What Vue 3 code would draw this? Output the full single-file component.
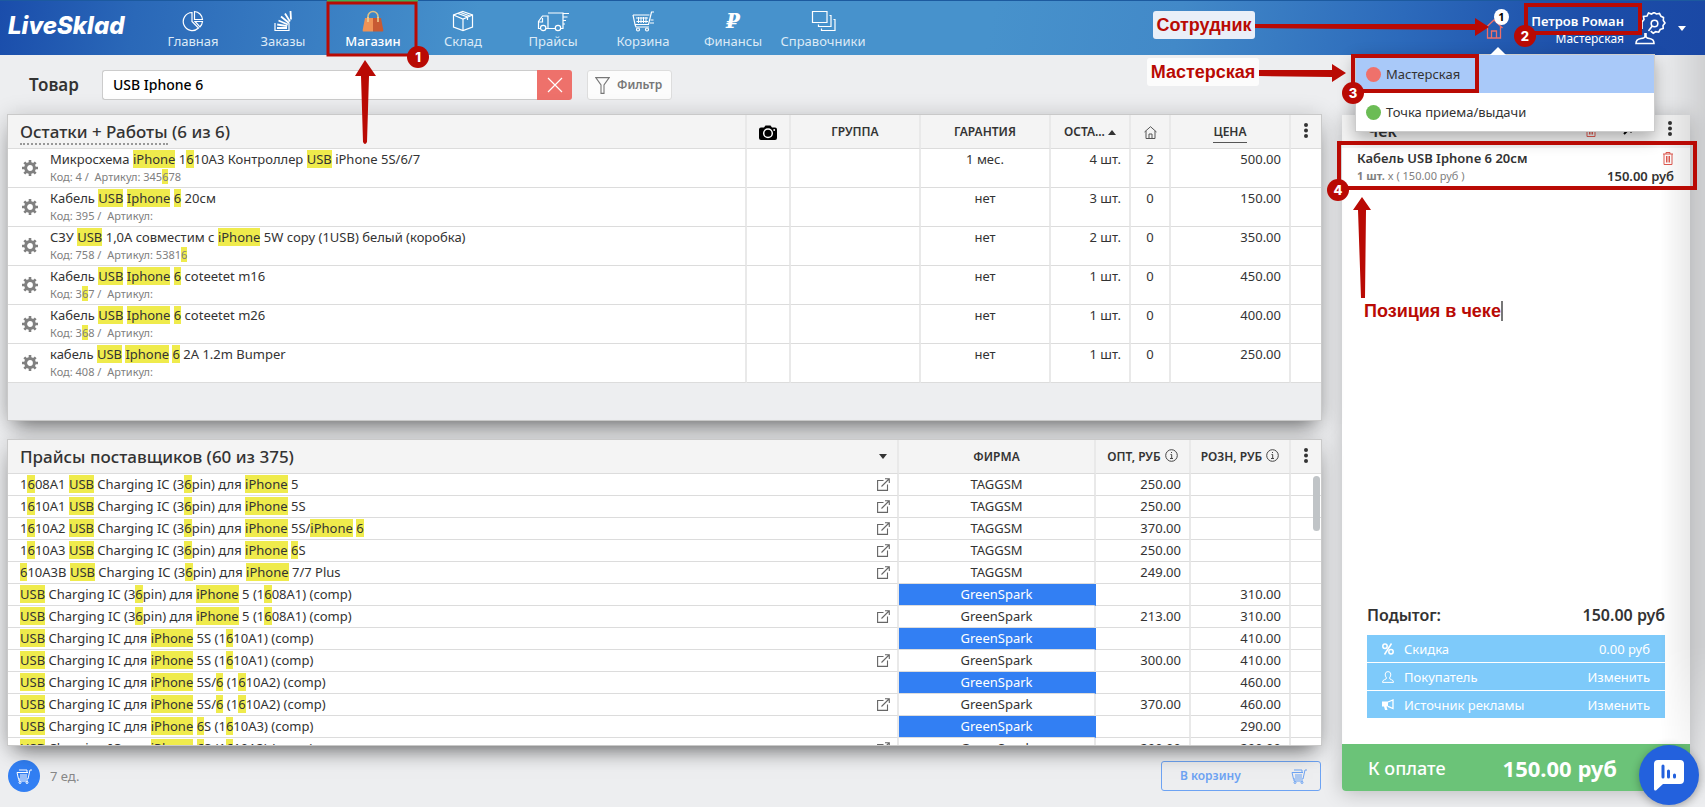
<script setup>
import { ref } from 'vue'

const query = ref('USB Iphone 6')

const nav = [
  { id: 'home', label: 'Главная' },
  { id: 'orders', label: 'Заказы' },
  { id: 'shop', label: 'Магазин', active: true },
  { id: 'stock', label: 'Склад' },
  { id: 'prices', label: 'Прайсы' },
  { id: 'cart', label: 'Корзина' },
  { id: 'finance', label: 'Финансы' },
  { id: 'books', label: 'Справочники' }
]

// Square brackets mark the fragments that match the search query.
const parts = (s) => s.split(/[[\]]/).map((text, i) => ({ text, hit: i % 2 === 1 }))

const goods = [
  { name: 'Микросхема [iPhone] 1[6]10A3 Контроллер [USB] iPhone 5S/6/7', code: '4', art: '345[6]78', warranty: '1 мес.', left: '4 шт.', house: 2, price: '500.00' },
  { name: 'Кабель [USB] [Iphone] [6] 20см', code: '395', art: '', warranty: 'нет', left: '3 шт.', house: 0, price: '150.00' },
  { name: 'СЗУ [USB] 1,0А совместим с [iPhone] 5W copy (1USB) белый (коробка)', code: '758', art: '5381[6]', warranty: 'нет', left: '2 шт.', house: 0, price: '350.00' },
  { name: 'Кабель [USB] [Iphone] [6] coteetet m16', code: '3[6]7', art: '', warranty: 'нет', left: '1 шт.', house: 0, price: '450.00' },
  { name: 'Кабель [USB] [Iphone] [6] coteetet m26', code: '3[6]8', art: '', warranty: 'нет', left: '1 шт.', house: 0, price: '400.00' },
  { name: 'кабель [USB] [Iphone] [6] 2A 1.2m Bumper', code: '408', art: '', warranty: 'нет', left: '1 шт.', house: 0, price: '250.00' }
]

const offers = [
  { name: '1[6]08A1 [USB] Charging IC (3[6]pin) для [iPhone] 5', link: true, firm: 'TAGGSM', opt: '250.00', retail: '' },
  { name: '1[6]10A1 [USB] Charging IC (3[6]pin) для [iPhone] 5S', link: true, firm: 'TAGGSM', opt: '250.00', retail: '' },
  { name: '1[6]10A2 [USB] Charging IC (3[6]pin) для [iPhone] 5S/[iPhone] [6]', link: true, firm: 'TAGGSM', opt: '370.00', retail: '' },
  { name: '1[6]10A3 [USB] Charging IC (3[6]pin) для [iPhone] [6]S', link: true, firm: 'TAGGSM', opt: '250.00', retail: '' },
  { name: '[6]10A3B [USB] Charging IC (3[6]pin) для [iPhone] 7/7 Plus', link: true, firm: 'TAGGSM', opt: '249.00', retail: '' },
  { name: '[USB] Charging IC (3[6]pin) для [iPhone] 5 (1[6]08A1) (comp)', firm: 'GreenSpark', mark: true, opt: '', retail: '310.00' },
  { name: '[USB] Charging IC (3[6]pin) для [iPhone] 5 (1[6]08A1) (comp)', link: true, firm: 'GreenSpark', opt: '213.00', retail: '310.00' },
  { name: '[USB] Charging IC для [iPhone] 5S (1[6]10A1) (comp)', firm: 'GreenSpark', mark: true, opt: '', retail: '410.00' },
  { name: '[USB] Charging IC для [iPhone] 5S (1[6]10A1) (comp)', link: true, firm: 'GreenSpark', opt: '300.00', retail: '410.00' },
  { name: '[USB] Charging IC для [iPhone] 5S/[6] (1[6]10A2) (comp)', firm: 'GreenSpark', mark: true, opt: '', retail: '460.00' },
  { name: '[USB] Charging IC для [iPhone] 5S/[6] (1[6]10A2) (comp)', link: true, firm: 'GreenSpark', opt: '370.00', retail: '460.00' },
  { name: '[USB] Charging IC для [iPhone] [6]S (1[6]10A3) (comp)', firm: 'GreenSpark', mark: true, opt: '', retail: '290.00' },
  { name: '[USB] Charging IC для [iPhone] [6]S (1[6]10A3) (comp)', link: true, firm: 'GreenSpark', opt: '290.00', retail: '290.00' }
]
</script>

<template>
  <div class="app">
    <header class="top">
      <a href="#" class="logo">LiveSklad</a>
      <nav class="nav">
        <a v-for="n in nav" :key="n.id" href="#" :class="['nav-item', { active: n.active }]">
          <span class="nav-icon">
            <svg v-if="n.id === 'home'" width="22" height="22" viewBox="0 0 22 22" class="line">
              <path d="M10 2.500A9 9 0 1 0 16.500 18L10 11.500Z" /><path d="M12.500 1.500a8.500 8.500 0 0 1 8 8h-8Z" /><path d="M13 11.500h7.500a9 9 0 0 1-2.600 5.500Z" />
            </svg>
            <svg v-else-if="n.id === 'orders'" width="20" height="22" viewBox="0 0 20 22" class="line">
              <path d="M2 13v7.500h14V13" /><path d="M4 18h10M4.200 14.500l10 1.600M5.500 10.500l9.300 4M8 6.500l8 6.500M12 3.500l5 8M17.500 1l.5 8.500" stroke-width="1.800" />
            </svg>
            <svg v-else-if="n.id === 'shop'" width="22" height="22" viewBox="0 0 22 22">
              <path d="M6 11V6.500a5 5 0 0 1 10 0V11" fill="none" stroke="#e2c183" stroke-width="1.600" />
              <path d="M3 8h8v13.500H1.200Q.5 21.500.7 20Z" fill="#ef9356" /><path d="M11 8h8l2.300 12q.2 1.500-1 1.500H11Z" fill="#c75a33" />
              <path d="M6 7v5M16 7v5" stroke="#f2d797" stroke-width="1.400" />
            </svg>
            <svg v-else-if="n.id === 'stock'" width="22" height="22" viewBox="0 0 22 22" class="line">
              <path d="M11 1.500l9.500 3.500v12L11 20.500 1.500 17V5Z" /><path d="M1.500 5L11 9l9.500-4M11 9v11.500M6 3.500L15.500 7v3M8.500 2.500L18 6" />
            </svg>
            <svg v-else-if="n.id === 'prices'" width="33" height="22" viewBox="0 0 33 22" class="line">
              <path d="M4 18.500H1.500v-7L5.500 6H11V18.500H8.500M11 3h15v15.500h-2.500M18.500 18.500H11M5.500 8v4H1.800" /><circle cx="6.200" cy="18" r="2.700" /><circle cx="21" cy="18" r="2.700" /><path d="M26 3.500h6M26 7h4.500M26 10.500h3M26 14h2" />
            </svg>
            <svg v-else-if="n.id === 'cart'" width="23" height="22" viewBox="0 0 23 22" class="line">
              <path d="M1 5h16.500M1 5l2 9.500h13.500L19.500 2h2.500M3 14.500l1 2.500h13" /><path d="M4 8h12M4.500 11.500H16M6.500 7v6M9 7v6M11.500 7v6M14 7v6M18.500 10h3M18 13h4" stroke-width="1" /><circle cx="6" cy="19.500" r="1.500" /><circle cx="15" cy="19.500" r="1.500" />
            </svg>
            <span v-else-if="n.id === 'finance'" class="ruble">₽</span>
            <svg v-else width="25" height="22" viewBox="0 0 25 22" class="line">
              <path d="M1.500 1.500h14.500v11H1.500Z" /><path d="M18.500 5.500h1.500v11H7.500V14.500M22.500 9.500h1.500v11H10.500V18.500" />
            </svg>
          </span>
          <span>{{ n.label }}</span>
        </a>
      </nav>

      <button class="branch" aria-label="Точки">
        <svg width="18" height="20" viewBox="0 0 18 20" fill="none" stroke="#ee6f69" stroke-width="1.300">
          <path d="M.5 9L9 1l8.500 8M2.500 7.500V19h13V7.500M6.500 19v-7h5v7" />
        </svg>
        <span class="branch-count">1</span>
      </button>
      <div class="user">
        <strong>Петров Роман</strong>
        <span>Мастерская</span>
      </div>
      <button class="profile" aria-label="Профиль">
        <svg width="31" height="33" viewBox="0 0 31 33" fill="none" stroke="#fff" stroke-width="1.600">
          <path d="M10 21v3.500q0 1.500-4 2-5 .7-5 5h18q0-4.300-4.500-5-3.500-.5-3.500-2V21" />
          <path d="M7 17V10l2-2.500-.5-3 3.500-.5 1.500-3 3 1 2.500-1.500 2.500 1.500 3-.5 1.500 2.800 2.500 1.200-.2 3 1.700 2.500-2 2.500.2 3-3 1-1.500 2.700-3-.5-2.500 1.500-2.500-2" />
          <circle cx="19.500" cy="11.500" r="3.300" /><path d="M17.200 14l-3.700 5" />
        </svg>
        <svg width="8" height="5" viewBox="0 0 8 5" fill="#fff"><path d="M0 0h8L4 5Z" /></svg>
      </button>

      <ul class="branches">
        <li class="current"><i class="dot red"></i>Мастерская</li>
        <li><i class="dot green"></i>Точка приема/выдачи</li>
      </ul>
    </header>

    <form class="search" @submit.prevent>
      <label for="q">Товар</label>
      <div class="field">
        <input id="q" v-model="query" type="text" />
        <button type="button" class="clear" aria-label="Очистить" @click="query = ''">
          <svg width="16" height="16" viewBox="0 0 16 16" stroke="#fff" stroke-width="1.200"><path d="M1 1l14 14M15 1L1 15" /></svg>
        </button>
      </div>
      <button type="button" class="filter">
        <svg width="15" height="17" viewBox="0 0 15 17" fill="none" stroke="#777" stroke-width="1.100"><path d="M.8.600h13.400L9 8v8.400H6V8Z" /></svg>
        Фильтр
      </button>
    </form>

    <main class="main">
      <section class="left">
        <div class="panel">
          <table class="goods">
            <colgroup>
              <col /><col class="w44" /><col class="w130" /><col class="w130" /><col class="w80" /><col class="w40" /><col class="w120" /><col class="w30" />
            </colgroup>
            <thead>
              <tr>
                <th class="title"><span class="dotted">Остатки + Работы</span> (6 из 6)</th>
                <th>
                  <svg width="18" height="15" viewBox="0 0 18 15"><path d="M2 2.500h3L6.500.500h5L13 2.500h3q2 0 2 2v8.500q0 2-2 2H2q-2 0-2-2V4.500q0-2 2-2Z" fill="#000" /><circle cx="9" cy="8.200" r="4.300" fill="none" stroke="#fff" stroke-width="1.500" /><circle cx="15.200" cy="5" r=".9" fill="#fff" /></svg>
                </th>
                <th>ГРУППА</th>
                <th>ГАРАНТИЯ</th>
                <th class="sorted">ОСТА... <svg width="8" height="5" viewBox="0 0 8 5" fill="#333"><path d="M0 5L4 0l4 5Z" /></svg></th>
                <th>
                  <svg width="13" height="13" viewBox="0 0 13 13" fill="none" stroke="#555"><path d="M.5 6L6.500.700l6 5.300M2 5v7.500h9V5M5 12.500V8h3v4.500" /></svg>
                </th>
                <th><span class="under">ЦЕНА</span></th>
                <th class="menu"><button aria-label="Меню таблицы"><svg width="4" height="15" viewBox="0 0 4 15" fill="#333"><circle cx="2" cy="2" r="2" /><circle cx="2" cy="7.500" r="2" /><circle cx="2" cy="13" r="2" /></svg></button></th>
              </tr>
            </thead>
            <tbody>
              <tr v-for="(g, i) in goods" :key="i">
                <td>
                  <div class="item">
                    <svg width="16" height="16" viewBox="0 0 16 16"><circle cx="8" cy="8" r="4.400" fill="none" stroke="#808080" stroke-width="3" /><path d="M8 0v3M8 13v3M0 8h3M13 8h3M2.300 2.300l2.200 2.200M11.500 11.500l2.200 2.200M2.300 13.700l2.200-2.200M11.500 4.500l2.200-2.200" stroke="#808080" stroke-width="2.600" /></svg>
                    <div>
                      <div class="name"><template v-for="(p, k) in parts(g.name)" :key="k"><mark v-if="p.hit">{{ p.text }}</mark><template v-else>{{ p.text }}</template></template></div>
                      <div class="sub">Код: <template v-for="(p, k) in parts(g.code)" :key="k"><mark v-if="p.hit">{{ p.text }}</mark><template v-else>{{ p.text }}</template></template> / &nbsp;Артикул: <template v-for="(p, k) in parts(g.art)" :key="k"><mark v-if="p.hit">{{ p.text }}</mark><template v-else>{{ p.text }}</template></template></div>
                    </div>
                  </div>
                </td>
                <td></td>
                <td></td>
                <td class="c">{{ g.warranty }}</td>
                <td class="r">{{ g.left }}</td>
                <td class="c">{{ g.house }}</td>
                <td class="r">{{ g.price }}</td>
                <td></td>
              </tr>
            </tbody>
          </table>
        </div>

        <div class="panel">
          <table class="offers">
            <colgroup>
              <col /><col class="w197" /><col class="w95" /><col class="w100" /><col class="w30" />
            </colgroup>
            <thead>
              <tr>
                <th class="title"><div class="split">Прайсы поставщиков (60 из 375) <svg width="8" height="5" viewBox="0 0 8 5" fill="#333"><path d="M0 0h8L4 5Z" /></svg></div></th>
                <th>ФИРМА</th>
                <th>ОПТ, РУБ <svg class="info" width="13" height="13" viewBox="0 0 13 13" fill="none" stroke="#444"><circle cx="6.500" cy="6.500" r="5.800" /><path d="M5.500 5.500h1.200v4M5 9.500h3M6 3.500h1" /></svg></th>
                <th>РОЗН, РУБ <svg class="info" width="13" height="13" viewBox="0 0 13 13" fill="none" stroke="#444"><circle cx="6.500" cy="6.500" r="5.800" /><path d="M5.500 5.500h1.200v4M5 9.500h3M6 3.500h1" /></svg></th>
                <th class="menu"><button aria-label="Меню таблицы"><svg width="4" height="15" viewBox="0 0 4 15" fill="#333"><circle cx="2" cy="2" r="2" /><circle cx="2" cy="7.500" r="2" /><circle cx="2" cy="13" r="2" /></svg></button></th>
              </tr>
            </thead>
            <tbody>
              <tr v-for="(o, i) in offers" :key="i">
                <td>
                  <div class="split">
                    <span><template v-for="(p, k) in parts(o.name)" :key="k"><mark v-if="p.hit">{{ p.text }}</mark><template v-else>{{ p.text }}</template></template></span>
                    <a v-if="o.link" href="#" aria-label="Открыть"><svg width="13" height="13" viewBox="0 0 13 13" fill="none" stroke="#666" stroke-width="1.100"><path d="M6.500 2.500H.600v9.900H10.500V6.500M4.500 8.500L12 1M8 .7h4.300V5" /></svg></a>
                  </div>
                </td>
                <td :class="['c', { mark: o.mark }]">{{ o.firm }}</td>
                <td class="r">{{ o.opt }}</td>
                <td class="r">{{ o.retail }}</td>
                <td></td>
              </tr>
            </tbody>
          </table>
          <i class="thumb"></i>
        </div>

        <footer class="bottom">
          <button class="round" aria-label="Корзина">
            <svg width="16" height="16" viewBox="0 0 16 16" fill="none" stroke="#fff"><path d="M1 4.500h11M1 4.500l1.500 6.500H12l2-9h2M3 2h8v2.500M4 7h7M4 9h7M3 11v2h9" /><circle cx="4" cy="14.500" r="1" /><circle cx="11" cy="14.500" r="1" /></svg>
          </button>
          <span>7 ед.</span>
          <button class="to-cart">
            В корзину
            <svg width="16" height="16" viewBox="0 0 16 16" fill="none" stroke="#6da3f3"><path d="M1 4.500h11M1 4.500l1.500 6.500H12l2-9h2M3 2h8v2.500M4 7h7M4 9h7M3 11v2h9" /><circle cx="4" cy="14.500" r="1" /><circle cx="11" cy="14.500" r="1" /></svg>
          </button>
        </footer>
      </section>

      <aside class="receipt">
        <div class="receipt-head">
          <h2>Чек</h2>
          <svg width="10" height="13" viewBox="0 0 10 13" fill="none" stroke="#e05a50"><path d="M0 2h10M3 2V.500h4V2M1 2v10.500h8V2M3.500 4v6.500M5 4v6.500M6.500 4v6.500" /></svg>
          <svg width="9" height="9" viewBox="0 0 9 9"><path d="M1 8l6-6M2.500 1H8v5.500" fill="none" stroke="#000" stroke-width="2" /></svg>
          <svg width="4" height="15" viewBox="0 0 4 15" fill="#333"><circle cx="2" cy="2" r="2" /><circle cx="2" cy="7.500" r="2" /><circle cx="2" cy="13" r="2" /></svg>
        </div>
        <div class="line-item">
          <div class="between">
            <strong>Кабель USB Iphone 6 20см</strong>
            <svg width="10" height="13" viewBox="0 0 10 13" fill="none" stroke="#e05a50"><path d="M0 2h10M3 2V.500h4V2M1 2v10.500h8V2M3.500 4v6.500M5 4v6.500M6.500 4v6.500" /></svg>
          </div>
          <div class="between">
            <span class="qty"><b>1 шт.</b> x ( 150.00 руб )</span>
            <strong>150.00 руб</strong>
          </div>
        </div>
        <div class="totals">
          <div class="between subtotal"><span>Подытог:</span><span>150.00 руб</span></div>
          <button class="opt">
            <svg width="12" height="12" viewBox="0 0 12 12" fill="none" stroke="#fff" stroke-width="1.500"><circle cx="3" cy="3.200" r="2.200" /><circle cx="9" cy="8.800" r="2.200" /><path d="M9.500.5l-7 11" /></svg>
            <span>Скидка</span><span>0.00 руб</span>
          </button>
          <button class="opt">
            <svg width="12" height="12" viewBox="0 0 12 12" fill="none" stroke="#fff"><path d="M4.500 7Q3 5 3.200 3 3.500.600 6 .600T8.800 3Q9 5 7.500 7q0 1.200 2 1.700 2 .5 2 2.700H.500q0-2.200 2-2.700 2-.5 2-1.700Z" /></svg>
            <span>Покупатель</span><span>Изменить</span>
          </button>
          <button class="opt">
            <svg width="12" height="12" viewBox="0 0 12 12"><path d="M0 2.500h6v5H4.500L5.500 11H3L2 7.500H0Z" fill="#fff" /><path d="M6 3l5-2v8.500L6 7.300" fill="none" stroke="#fff" stroke-width="1.300" /></svg>
            <span>Источник рекламы</span><span>Изменить</span>
          </button>
        </div>
        <button class="pay"><span>К оплате</span><strong>150.00 руб</strong></button>
      </aside>
    </main>

    <div class="edge-shade"></div>

    <button class="chat" aria-label="Чат">
      <svg width="30" height="31" viewBox="0 0 30 31"><path d="M4 0h22q4 0 4 4v16q0 4-4 4H9l-7 6.500Q0 31 0 29V4Q0 0 4 0Z" fill="#fff" /><path d="M9 6v11M14.500 11v6M20.500 15v2" stroke="#2361dd" stroke-width="3" stroke-linecap="round" /></svg>
    </button>

    <div class="notes notes-left">
      <svg width="440" height="150" viewBox="0 0 440 150">
        <path d="M327 1h91" stroke="#3fae56" stroke-width="2" />
        <rect x="328" y="3" width="88" height="52" fill="none" stroke="#b90a04" stroke-width="3" />
        <path d="M365 60l11 16h-7l-2 66q-2 4-4 0l-2-66h-6Z" fill="#b90a04" />
      </svg>
      <b class="num n1">1</b>
    </div>
    <div class="notes notes-right">
      <span class="tag t1">Сотрудник</span>
      <span class="tag t2">Мастерская</span>
      <svg width="560" height="330" viewBox="0 0 560 330">
        <g fill="none" stroke="#b90a04" stroke-width="4">
          <rect x="381" y="5" width="114" height="28" />
          <rect x="208" y="56" width="124" height="35" />
          <rect x="194" y="143" width="356" height="45" />
        </g>
        <g fill="#b90a04">
          <path d="M108 24l222 0v-6l14 9-14 9v-6L108 28Z" />
          <path d="M114 70l73 0v-6l14 9-14 9v-5L114 76Z" />
          <path d="M217 197l9 13h-5l-1 88h-4l-3-88h-5Z" />
        </g>
      </svg>
      <span class="tag t3">Позиция в чеке</span>
      <b class="num n2">2</b>
      <b class="num n3">3</b>
      <b class="num n4">4</b>
    </div>
  </div>
</template>

<style>
body { margin: 0; background: #edeef0; }
</style>

<style scoped>
* { box-sizing: border-box; }
.app { position: relative; display: flex; flex-direction: column; height: 100vh; overflow: hidden; background: #edeef0; color: #333; font: 13px/18px "Noto Sans", "Open Sans", sans-serif; }
button { border: 0; padding: 0; background: none; font: inherit; color: inherit; cursor: pointer; }
a { color: inherit; text-decoration: none; }
svg { display: block; flex: none; }
.top { position: relative; z-index: 2; flex: none; display: flex; align-items: center; height: 55px; padding-right: 19px; background: linear-gradient(100deg, #1a4dab 0, #2a68b8 8%, #3a7fc3 19%, #4792cc 28%, #4792cc 58%, #4289c8 69%, #2c6abb 82%, #1c4da8 93%, #1a48a5 100%); border-top: 1px solid #1c5a9f; color: #fff; }
.logo { width: 148px; padding-left: 8px; padding-bottom: 4px; font: italic 800 24px/30px Inter, sans-serif; }
.nav { display: flex; }
.nav-item { width: 90px; display: flex; flex-direction: column; align-items: center; color: #dceaf6; font-size: 13px; line-height: 16px; padding-bottom: 0; padding-top: 1px; }
.nav-item.active { color: #fff; font-weight: 500; }
.nav-icon { height: 24px; display: flex; align-items: center; }
.line { fill: none; stroke: #fff; stroke-width: 1.2; }
.ruble { font: italic bold 20px/22px "DejaVu Serif", serif; color: #fff; }
.branch { position: relative; margin-left: auto; margin-right: 25px; padding-bottom: 0; padding-top: 2px; }
.branch-count { position: absolute; left: 9px; top: -8px; width: 15px; height: 16px; border-radius: 50%; background: #fff; color: #000; font: bold 11px/15px "Noto Sans", sans-serif; }
.user { display: flex; flex-direction: column; align-items: flex-end; width: 96px; margin-right: 11px; white-space: nowrap; font-size: 12px; line-height: 17px; padding-top: 4px; }
.user strong { font-size: 13px; font-weight: 600; }
.profile { display: flex; align-items: center; gap: 12px; }
.branches { position: absolute; right: 50px; top: 53px; width: 300px; margin: 0; padding: 0; list-style: none; background: #fff; color: #333; border: 1px solid #ccc; box-shadow: 0 6px 16px rgba(0, 0, 0, .3); }
.branches::before { content: ""; position: absolute; left: 134px; top: -8px; border: 8px solid transparent; border-top: 0; border-bottom-color: #fff; }
.branches li { display: flex; align-items: center; gap: 5px; height: 38px; padding-left: 10px; }
.branches .current { background: #a9c9f9; }
.dot { width: 15px; height: 15px; border-radius: 50%; }
.red { background: #ef716b; }
.green { background: #6bbc55; }

.search { flex: none; display: flex; align-items: center; height: 60px; padding: 0 29px; }
.search label { width: 73px; font-size: 17px; font-weight: 600; }
.field { display: flex; width: 470px; height: 30px; margin-right: 15px; }
.field input { flex: 1; min-width: 0; padding: 0 10px; border: 1px solid #ccc; border-right: 0; border-radius: 3px 0 0 3px; background: #fff; color: #000; font: 500 14px/20px "Noto Sans", sans-serif; outline: 0; }
.clear { width: 35px; display: grid; place-items: center; background: #ee716b; border-radius: 0 3px 3px 0; }
.filter { display: flex; align-items: center; gap: 7px; height: 30px; padding: 0 9px 0 7px; border: 1px solid #ddd; border-radius: 3px; background: #fcfcfc; color: #777; font-weight: 600; font-size: 12px; }

.main { flex: 1; min-height: 0; display: grid; grid-template-columns: minmax(0, 1fr) 348px; gap: 21px; padding: 0 15px 16px 8px; }
.left { display: flex; flex-direction: column; min-height: 0; }
.panel { position: relative; flex: 1 1 0; min-height: 0; overflow: hidden; background: #edeef0; box-shadow: 0 0 0 1px #c9c9c9, 0 2px 22px rgba(0, 0, 0, .2), 0 12px 20px -8px rgba(0, 0, 0, .5); }
.panel + .panel { margin-top: 20px; }
table { width: 100%; table-layout: fixed; border-collapse: separate; border-spacing: 0; }
th, td { padding: 0 8px; border-bottom: 1px solid #dcdcdc; border-right: 2px solid #e9e9e9; text-align: left; white-space: nowrap; overflow: hidden; }
th:last-child, td:last-child { border-right: 0; }
th { height: 34px; background: #f4f4f4; font-size: 12px; font-weight: 600; text-align: center; }
th svg { display: inline-block; vertical-align: middle; }
th .info { margin-top: -3px; margin-left: 1px; }
th.title { padding: 0 10px 0 12px; font-size: 17px; font-weight: 500; line-height: 22px; text-align: left; }
th.sorted { padding: 0 4px; }
.dotted { border-bottom: 2px dotted #999; }
.under { border-bottom: 1px solid #555; padding-bottom: 2px; }
th.menu { padding: 0; }
.menu button { display: inline-block; vertical-align: middle; padding-bottom: 4px; }
td { background: #fff; }
.c { text-align: center; }
.r { text-align: right; }
.goods td { height: 39px; padding-top: 1px; vertical-align: top; }
.goods td:first-child { padding-left: 14px; }
.item { display: flex; align-items: center; gap: 12px; }
.sub { color: #808080; font-size: 11px; line-height: 18px; }
mark { background: #efeb4c; color: inherit; }
.offers td { height: 22px; line-height: 21px; }
.offers td:first-child { padding: 0 7px 0 12px; }
.offers .mark { background: #327ff3; color: #fff; border-right-color: #327ff3; }
.split { display: flex; align-items: center; justify-content: space-between; }
.thumb { position: absolute; right: 1px; top: 36px; width: 7px; height: 55px; border-radius: 4px; background: #c0c4c7; }
.w30 { width: 30px; }
.w40 { width: 40px; }
.w44 { width: 44px; }
.w80 { width: 80px; }
.w95 { width: 95px; }
.w100 { width: 100px; }
.w120 { width: 120px; }
.w130 { width: 130px; }
.w197 { width: 197px; }
.bottom { flex: none; display: flex; align-items: center; gap: 10px; margin-top: 15px; height: 31px; color: #888; }
.round { width: 32px; height: 32px; border-radius: 50%; background: #327ff3; display: grid; place-items: center; }
.to-cart { margin-left: auto; display: flex; align-items: center; justify-content: space-between; width: 160px; height: 30px; padding: 0 13px 0 18px; border: 1px solid #6da3f3; border-radius: 3px; color: #6da3f3; font-weight: 600; font-size: 12px; }

.receipt { display: flex; flex-direction: column; min-height: 0; background: #fff; border-radius: 0 0 4px 4px; box-shadow: 0 2px 20px rgba(0, 0, 0, .22); }
.receipt-head { display: flex; align-items: center; height: 33px; padding: 0 18px 2px 25px; background: #f4f4f4; }
.receipt-head h2 { flex: 1; margin: 0; font-size: 16px; font-weight: 600; }
.receipt-head svg + svg { margin-left: 27px; }
.receipt-head svg:last-child { margin-left: 36px; margin-bottom: 4px; }
.between { display: flex; align-items: center; justify-content: space-between; }
.line-item { padding: 1px 16px 0 15px; }
.line-item strong { font-weight: 600; }
.line-item svg { margin-right: 1px; }
.qty { color: #808080; font-size: 11px; }
.totals { margin-top: auto; padding: 0 25px 26px; }
.subtotal { height: 40px; font-size: 16px; font-weight: 600; }
.opt { display: flex; align-items: center; width: 100%; height: 27px; padding: 0 15px; background: #7ecafa; color: #fff; }
.opt + .opt { margin-top: 1px; }
.opt span:nth-child(2) { margin-left: 10px; }
.opt span:last-child { margin-left: auto; }
.pay { display: flex; align-items: center; justify-content: space-between; height: 47px; padding: 0 73px 0 26px; border-radius: 0 0 4px 4px; background: #6bc378; color: #fff; font-size: 18px; font-weight: 500; }
.pay strong { font-size: 22px; font-weight: 700; }
.edge-shade { position: absolute; right: 0; top: 0; bottom: 0; width: 45px; z-index: 1; background: linear-gradient(90deg, transparent, rgba(0, 0, 0, .12)); mask-image: linear-gradient(#000 80%, transparent); pointer-events: none; }
.chat { position: absolute; z-index: 3; right: 6px; bottom: 2px; width: 60px; height: 60px; border-radius: 50%; background: #2361dd; display: grid; place-items: center; box-shadow: 0 2px 8px rgba(0, 0, 0, .3); }

.notes { position: absolute; top: 0; z-index: 4; pointer-events: none; }
.notes-left { left: 0; }
.notes-right { right: 0; width: 560px; }
.num { position: absolute; width: 22px; height: 22px; border-radius: 50%; background: #b90a04; color: #fff; font: 800 13px/22px Inter, sans-serif; text-align: center; }
.n1 { left: 407px; top: 46px; }
.n2 { left: 369px; top: 25px; }
.n3 { left: 197px; top: 82px; }
.n4 { left: 182px; top: 179px; }
.tag { position: absolute; border-radius: 3px; color: #b90a04; font: bold 18px/28px "Liberation Sans", Arial, sans-serif; white-space: nowrap; text-align: center; }
.t1 { left: 8px; top: 11px; width: 102px; background: #e9eff8; }
.t2 { left: 2px; top: 58px; width: 112px; background: #fcfcfc; }
.t3 { left: 219px; top: 301px; line-height: 20px; border-right: 2px solid #777; border-radius: 0; }
</style>
